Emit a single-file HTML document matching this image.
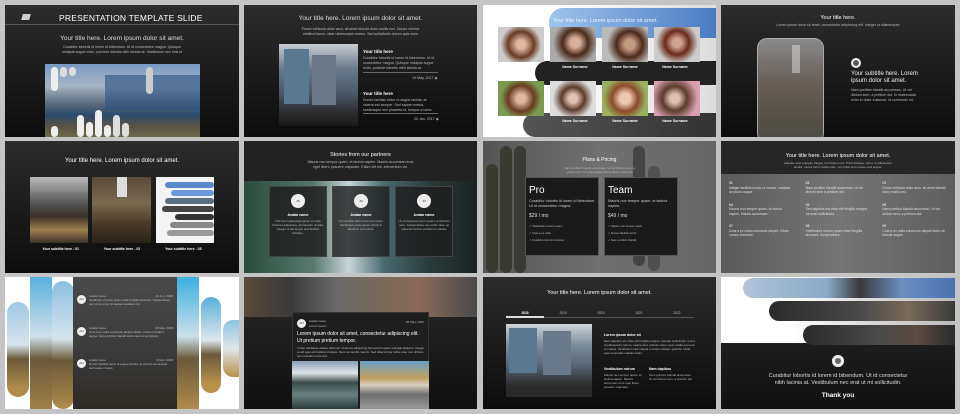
<!DOCTYPE html>
<html><head><meta charset="utf-8"><style>
*{margin:0;padding:0;box-sizing:border-box}
body{width:960px;height:414px;background:#c4c4c4;position:relative;overflow:hidden;font-family:"Liberation Sans",sans-serif;color:#fff}
.s{position:absolute;overflow:hidden;background:linear-gradient(#2c2c2c,#0c0c0c)}
.a{position:absolute}
.t{position:absolute;left:0;right:0;text-align:center;white-space:nowrap}
.sm{font-size:3.6px;color:#bbb;line-height:5px}
.pill{position:absolute;border-radius:20px}
.c{position:absolute;border-radius:50%;background:#eee;color:#333;font-size:3px;text-align:center}
</style></head><body>

<!-- Slide 1 -->
<div class="s" style="left:5px;top:5px;width:234px;height:132px">
 <div class="a" style="left:17px;top:9px;width:8px;height:6px;background:#ccc;transform:skewX(-15deg)"></div>
 <div class="a" style="left:54px;top:8px;font-size:8.5px;letter-spacing:.2px">PRESENTATION TEMPLATE SLIDE</div>
 <div class="a" style="left:0;right:0;top:19px;height:1px;background:#555"></div>
 <div class="t" style="top:30px;font-size:6.5px;color:#ddd">Your title here. Lorem ipsum dolor sit amet.</div>
 <div class="t sm" style="top:40px">Curabitur lobortis id lorem id bibendum. Ut id consectetur magna. Quisque<br>volutpat augue enim, pulvinar lobortis nibh lacinia at. Vestibulum nec erat ut</div>
 <div class="a" style="left:40px;top:59px;width:155px;height:73px;background:linear-gradient(180deg,#7a9ac4 0%,#a7b4c4 30%,#5a6a7a 55%,#2a4b6a 70%,#5a5245 85%,#6b6a48 100%)"></div>
 <div class="a" style="left:100px;top:70px;width:95px;height:35px;background:rgba(40,80,130,.6)"></div>
 <div class="pill" style="left:46px;top:62px;width:7px;height:24px;background:#eee"></div>
 <div class="pill" style="left:55px;top:62px;width:7px;height:10px;background:#ddd"></div>
 <div class="pill" style="left:64px;top:62px;width:7px;height:9px;background:#ddd"></div>
 <div class="pill" style="left:72px;top:110px;width:7px;height:22px;background:#eee"></div>
 <div class="pill" style="left:81px;top:117px;width:7px;height:15px;background:#eee"></div>
 <div class="pill" style="left:90px;top:105px;width:7px;height:27px;background:#eee"></div>
 <div class="pill" style="left:99px;top:120px;width:7px;height:12px;background:#eee"></div>
 <div class="pill" style="left:108px;top:110px;width:7px;height:22px;background:#ddd"></div>
 <div class="pill" style="left:117px;top:118px;width:7px;height:14px;background:#ddd"></div>
 <div class="pill" style="left:141px;top:62px;width:7px;height:27px;background:#ccc"></div>
 <div class="pill" style="left:46px;top:121px;width:7px;height:11px;background:#eee"></div>
</div>

<!-- Slide 2 -->
<div class="s" style="left:244px;top:5px;width:233px;height:132px">
 <div class="t" style="top:10px;font-size:6.5px;color:#ddd">Your title here. Lorem ipsum dolor sit amet.</div>
 <div class="t sm" style="top:22px">Fusce vehicula dolor arcu, sit amet blandit dolor mollis nec. Donec viverra<br>eleifend lacus, vitae ullamcorper metus. Sed sollicitudin ipsum quis nunc</div>
 <div class="a" style="left:35px;top:39px;width:79px;height:82px;background:linear-gradient(180deg,#c8ccd2 0%,#6a7a8a 30%,#4a5868 60%,#2a2a2a 85%,#1a1a1a)"></div>
 <div class="a" style="left:40px;top:44px;width:25px;height:55px;background:#5a7890"></div>
 <div class="a" style="left:68px;top:50px;width:24px;height:50px;background:#6a7888"></div>
 <div class="a" style="left:119px;top:44px;font-size:4.5px;font-weight:bold">Your title here</div>
 <div class="a sm" style="left:119px;top:51px;width:75px">Curabitur lobortis id lorem id bibendum. Ut id consectetur magna. Quisque volutpat augue enim, pulvinar lobortis nibh lacinia at.</div>
 <div class="a" style="left:119px;top:67px;width:75px;height:1px;background:#666"></div>
 <div class="a sm" style="left:168px;top:71px">19 May, 2017 ◉</div>
 <div class="a" style="left:119px;top:86px;font-size:4.5px;font-weight:bold">Your title here</div>
 <div class="a sm" style="left:119px;top:93px;width:75px">Donec facilisis tortor ut augue lacinia, at viverra est semper. Sed sapien metus, scelerisque nec pharetra id, tempor a tortor.</div>
 <div class="a" style="left:119px;top:108px;width:75px;height:1px;background:#666"></div>
 <div class="a sm" style="left:170px;top:112px">20 Jan, 2017 ◉</div>
</div>

<!-- Slide 3 -->
<div class="s" style="left:483px;top:5px;width:233px;height:132px;background:linear-gradient(90deg,#fff 30%,#ddd)">
 <div class="a" style="left:66px;top:3px;width:167px;height:30px;border-radius:14px 0 0 14px;background:linear-gradient(90deg,#9ec4ec,#4a7cc4)"></div>
 <div class="a" style="left:70px;top:13px;font-size:5.5px;color:#e8f0ff">Your title here. Lorem ipsum dolor sit amet.</div>
 <div class="a" style="left:52px;top:56px;width:181px;height:24px;border-radius:12px 0 0 12px;background:#222"></div>
 <div class="a" style="left:40px;top:108px;width:193px;height:24px;border-radius:12px 0 0 12px;background:linear-gradient(90deg,#555,#333)"></div>
 <div class="a" style="left:15px;top:22px;width:46px;height:35px;background:radial-gradient(circle at 50% 50%,#e0b8a0 15%,#6a3a24 45%,#ccc 70%)"></div>
 <div class="a" style="left:67px;top:22px;width:46px;height:35px;background:radial-gradient(circle at 55% 45%,#d8b09a 15%,#4a2a1a 40%,#aaa 70%)"></div>
 <div class="a" style="left:119px;top:22px;width:46px;height:35px;background:radial-gradient(circle at 60% 50%,#c49a80 15%,#4a2a1a 40%,#bbb 70%)"></div>
 <div class="a" style="left:171px;top:22px;width:46px;height:35px;background:radial-gradient(circle at 50% 45%,#d0a090 15%,#6a2a1a 40%,#ccc 70%)"></div>
 <div class="a" style="left:15px;top:76px;width:46px;height:35px;background:radial-gradient(circle at 50% 50%,#e0b8a0 15%,#6a3a20 45%,#7a9a50 70%)"></div>
 <div class="a" style="left:67px;top:76px;width:46px;height:35px;background:radial-gradient(circle at 50% 50%,#e0c0b0 15%,#5a3a2a 40%,#ddd 70%)"></div>
 <div class="a" style="left:119px;top:76px;width:46px;height:35px;background:radial-gradient(circle at 50% 50%,#f0c8b0 18%,#8a4a2a 45%,#9ab060 75%)"></div>
 <div class="a" style="left:171px;top:76px;width:46px;height:35px;background:radial-gradient(circle at 45% 50%,#e0c0b0 15%,#5a3a2a 40%,#d8a0b0 75%)"></div>
 <div class="a" style="left:67px;top:60px;width:150px;font-size:3.5px;font-weight:bold;display:flex;justify-content:space-around"><span>Name Surname</span><span>Name Surname</span><span>Name Surname</span></div>
 <div class="a" style="left:67px;top:114px;width:150px;font-size:3.5px;font-weight:bold;display:flex;justify-content:space-around"><span>Name Surname</span><span>Name Surname</span><span>Name Surname</span></div>
</div>

<!-- Slide 4 -->
<div class="s" style="left:721px;top:5px;width:234px;height:132px">
 <div class="t" style="top:10px;font-size:5.5px">Your title here.</div>
 <div class="t sm" style="top:18px">Lorem ipsum dolor sit amet, consectetur adipiscing elit. Integer ut ullamcorper</div>
 <div class="a" style="left:36px;top:33px;width:67px;height:105px;border:1.5px solid #aaa;border-radius:10px;background:linear-gradient(180deg,#8a8a8a,#6a605a 40%,#5a5448 70%,#4a4a44)"></div>
 <div class="a" style="left:71px;top:40px;width:8px;height:28px;background:#ddd;opacity:.5"></div>
 <div class="c" style="left:130px;top:53px;width:10px;height:10px;background:#eee;border:2.5px solid #eee;box-shadow:inset 0 0 0 3px #555"></div>
 <div class="a" style="left:130px;top:66px;font-size:6px;line-height:7px;color:#eee">Your subtitle here. Lorem<br>ipsum dolor sit amet.</div>
 <div class="a sm" style="left:130px;top:83px;width:65px">Nam porttitor blandit accumsan. Ut vel dictum sem, a pretium dui. In malesuada enim in dolor euismod, id commodo mi.</div>
</div>

<!-- Slide 5 -->
<div class="s" style="left:5px;top:141px;width:234px;height:132px">
 <div class="t" style="top:17px;font-size:6px">Your title here. Lorem ipsum dolor sit amet.</div>
 <div class="a" style="left:25px;top:36px;width:58px;height:66px;background:linear-gradient(180deg,#bbb,#555 40%,#3a3028 60%,#a08050 80%,#3a3028)"></div>
 <div class="a" style="left:87px;top:36px;width:59px;height:66px;background:linear-gradient(180deg,#5a4a3a,#7a6a50 40%,#4a3a2a 70%,#2a2218)"></div>
 <div class="a" style="left:112px;top:36px;width:10px;height:20px;background:#ddd"></div>
 <div class="a" style="left:151px;top:36px;width:58px;height:66px;background:#f4f4f4"></div>
 <div class="pill" style="left:160px;top:41px;width:49px;height:6px;background:#5a88c8"></div>
 <div class="pill" style="left:166px;top:49px;width:43px;height:6px;background:#6a98d8"></div>
 <div class="pill" style="left:160px;top:57px;width:49px;height:6px;background:#5a7080"></div>
 <div class="pill" style="left:157px;top:65px;width:52px;height:6px;background:#444"></div>
 <div class="pill" style="left:170px;top:73px;width:39px;height:6px;background:#333"></div>
 <div class="pill" style="left:165px;top:81px;width:44px;height:6px;background:#888"></div>
 <div class="pill" style="left:162px;top:89px;width:47px;height:6px;background:#999"></div>
 <div class="a" style="left:25px;top:106px;width:184px;font-size:3.5px;font-weight:bold;display:flex;justify-content:space-around"><span>Your subtitle here - 01</span><span>Your subtitle here - 02</span><span>Your subtitle here - 03</span></div>
</div>

<!-- Slide 6 -->
<div class="s" style="left:244px;top:141px;width:233px;height:132px;background:#222">
 <div class="t" style="top:11px;font-size:5.5px">Stories from our partners</div>
 <div class="t sm" style="top:19px">Mauris non tempor quam, et lacinia sapien. Mauris accumsan eros<br>eget libero posuere vulputate. Etiam elit elit, elementum vel.</div>
 <div class="a" style="left:0;top:40px;width:233px;height:92px;background:linear-gradient(90deg,#2a4a3a,#5a7a70 30%,#c8d4d8 45%,#4a6a70 60%,#2a3a3a 80%,#1a2222)"></div>
 <div class="a" style="left:25px;top:45px;width:58px;height:71px;background:rgba(30,30,30,.85);border:1px solid #444"></div>
 <div class="a" style="left:88px;top:45px;width:58px;height:71px;background:rgba(30,30,30,.8);border:1px solid #444"></div>
 <div class="a" style="left:151px;top:45px;width:58px;height:71px;background:rgba(30,30,30,.85);border:1px solid #444"></div>
 <div class="c" style="left:47px;top:53px;width:14px;height:14px;line-height:14px">JN</div>
 <div class="c" style="left:110px;top:53px;width:14px;height:14px;line-height:14px">JN</div>
 <div class="c" style="left:173px;top:53px;width:14px;height:14px;line-height:14px">JN</div>
 <div class="a" style="left:25px;top:72px;width:58px;text-align:center;font-size:3.5px;font-weight:bold">Avatar name</div>
 <div class="a" style="left:88px;top:72px;width:58px;text-align:center;font-size:3.5px;font-weight:bold">Avatar name</div>
 <div class="a" style="left:151px;top:72px;width:58px;text-align:center;font-size:3.5px;font-weight:bold">Avatar name</div>
 <div class="a sm" style="left:28px;top:78px;width:52px;text-align:center;font-size:3px;line-height:4px">Orci leo malesuada ipsum at nulla rhoncus adipiscing, fermentum ut ante. Integer id elit augue sed facilisis tristique.</div>
 <div class="a sm" style="left:91px;top:78px;width:52px;text-align:center;font-size:3px;line-height:4px">Ut convallis nibh in dui commodo. Vestibulum ante ipsum primis in faucibus orci luctus.</div>
 <div class="a sm" style="left:154px;top:78px;width:52px;text-align:center;font-size:3px;line-height:4px">Ut consectetur ipsum quam, a rhoncus arcu. Suspendisse nec tortor vitae, at placerat ultrices porttitor in massa.</div>
</div>

<!-- Slide 7 -->
<div class="s" style="left:483px;top:141px;width:233px;height:132px;background:linear-gradient(90deg,#555,#707070 50%,#666)">
 <div class="pill" style="left:3px;top:23px;width:12px;height:109px;background:#3a3a30"></div>
 <div class="pill" style="left:17px;top:5px;width:12px;height:127px;background:#3a3a30"></div>
 <div class="pill" style="left:31px;top:5px;width:12px;height:127px;background:#3a3a34"></div>
 <div class="pill" style="left:150px;top:5px;width:12px;height:120px;background:#444"></div>
 <div class="pill" style="left:165px;top:25px;width:12px;height:105px;background:#505050"></div>
 <div class="t" style="top:16px;font-size:5px">Plans &amp; Pricing</div>
 <div class="t sm" style="top:25px;font-size:3px;line-height:4px">Nam porttitor blandit accumsan. Ut vel dictum sem, a<br>pretium dui. In malesuada enim in dolor euismod.</div>
 <div class="a" style="left:42px;top:36px;width:74px;height:79px;background:#1a1a1a;border:1px solid #555"></div>
 <div class="a" style="left:121px;top:36px;width:74px;height:79px;background:#1a1a1a;border:1px solid #555"></div>
 <div class="a" style="left:46px;top:44px;font-size:10px">Pro</div>
 <div class="a" style="left:125px;top:44px;font-size:10px">Team</div>
 <div class="a" style="left:46px;top:58px;width:68px;font-size:3.8px;line-height:5px;color:#ccc">Curabitur lobortis id lorem id bibendum. Ut id consectetur magna.</div>
 <div class="a" style="left:125px;top:58px;width:68px;font-size:3.8px;line-height:5px;color:#ccc">Mauris non tempor quam, et lacinia sapien.</div>
 <div class="a" style="left:46px;top:72px;font-size:5px;color:#ddd">$29 / mo</div>
 <div class="a" style="left:125px;top:72px;font-size:5px;color:#ddd">$49 / mo</div>
 <div class="a sm" style="left:46px;top:82px;font-size:2.8px;line-height:7px">✓ Vestibulum rutrum quam<br>✓ Cras a ex nulla<br>✓ Curabitur lobortis id lorem</div>
 <div class="a sm" style="left:125px;top:82px;font-size:2.8px;line-height:7px">✓ Mauris non tempor quam<br>✓ Donec facilisis tortor<br>✓ Nam porttitor blandit</div>
</div>

<!-- Slide 8 -->
<div class="s" style="left:721px;top:141px;width:234px;height:132px;background:linear-gradient(90deg,#5a5a5a,#767676 50%,#5e5e5e)">
 <div class="a" style="left:0;top:0;width:234px;height:33px;background:#262626"></div>
 <div class="t" style="top:12px;font-size:5.5px">Your title here. Lorem ipsum dolor sit amet.</div>
 <div class="t sm" style="top:20px;font-size:3px;line-height:4px">Aliquam erat volutpat. Integer ut tincidunt orci. Proin tristique, elit ut condimentum<br>iaculis, metus tortor mattis justo, vel mollis eros neque quis augue.</div>
 <div class="a" style="left:8px;top:40px;width:218px;font-size:3.4px;line-height:4.5px;color:#ddd;display:grid;grid-template-columns:1fr 1fr 1fr;row-gap:8px;column-gap:12px">
  <div><b>01</b><br>Integer facilisis luctus ut mauris, volutpat ac purus augue.</div>
  <div><b>02</b><br>Nam porttitor blandit accumsan. Ut vel dictum sem a pretium dui.</div>
  <div><b>03</b><br>Fusce vehicula dolor arcu, sit amet blandit dolor mollis nec.</div>
  <div><b>04</b><br>Mauris non tempor quam, et lacinia sapien. Mauris accumsan.</div>
  <div><b>05</b><br>Sed dapibus est vitae elit fringilla congue. Aenean sollicitudin.</div>
  <div><b>06</b><br>Nam porttitor blandit accumsan. Ut vel dictum sem, a pretium dui.</div>
  <div><b>07</b><br>Cras a ex nulla commodo aliquet. Etiam cursus tincidunt.</div>
  <div><b>08</b><br>Vestibulum rutrum quam vitae fringilla tincidunt. Suspendisse.</div>
  <div><b>09</b><br>Cras a ex nulla commodo aliquet dolor sit blandit augue.</div>
 </div>
</div>

<!-- Slide 9 -->
<div class="s" style="left:5px;top:277px;width:234px;height:132px;background:#fff">
 <div class="pill" style="left:2px;top:25px;width:22px;height:95px;background:linear-gradient(#9cc8e4,#d8e4ec 45%,#6a5a3a 60%,#b08a4a 90%)"></div>
 <div class="pill" style="left:25px;top:0;width:22px;height:132px;border-radius:0;background:linear-gradient(#5ab0dc,#cfe0ea 45%,#6a5a3a 62%,#a08048)"></div>
 <div class="pill" style="left:47px;top:4px;width:22px;height:128px;background:linear-gradient(#8ac0e0,#d8e4ec 45%,#6a5a3a 62%,#b08a4a)"></div>
 <div class="a" style="left:68px;top:0;width:104px;height:132px;background:linear-gradient(#4a4a4a,#3a3a3a 60%,#2e2a24)"></div>
 <div class="pill" style="left:172px;top:0;width:22px;height:132px;border-radius:0;background:linear-gradient(#3ab0e0,#cce0ea 45%,#6a5a3a 62%,#b08a4a)"></div>
 <div class="pill" style="left:196px;top:20px;width:20px;height:96px;background:linear-gradient(#5ab0dc,#dde6ec 45%,#6a5a3a 60%,#b8904a 90%)"></div>
 <div class="pill" style="left:218px;top:43px;width:16px;height:57px;border-radius:10px 0 0 10px;background:linear-gradient(#8ac4e0,#e0e6ea 50%,#b8904a)"></div>
 <div class="c" style="left:72px;top:18px;width:9px;height:9px;line-height:9px">AN</div>
 <div class="c" style="left:72px;top:50px;width:9px;height:9px;line-height:9px">AN</div>
 <div class="c" style="left:72px;top:82px;width:9px;height:9px;line-height:9px">AN</div>
 <div class="a sm" style="left:84px;top:17px;width:84px;font-size:3px;line-height:4px">Avatar name<span style="float:right">21 Jun, 2018</span><br>Vestibulum rutrum quam vitae fringilla tincidunt. Suspendisse nec tortor urna. Ut laoreet sodales nisi.</div>
 <div class="a sm" style="left:84px;top:49px;width:84px;font-size:3px;line-height:4px">Avatar name<span style="float:right">26 May, 2018</span><br>Cras a ex nulla commodo aliquet. Etiam cursus tincidunt augue. Nam porttitor blandit accumsan ut vel dictum.</div>
 <div class="a sm" style="left:84px;top:81px;width:84px;font-size:3px;line-height:4px">Avatar name<span style="float:right">19 Apr, 2018</span><br>Donec facilisis tortor ut augue lacinia, at viverra est semper sed sapien metus.</div>
</div>

<!-- Slide 10 -->
<div class="s" style="left:244px;top:277px;width:233px;height:132px;background:linear-gradient(#2a2a2a,#101010)">
 <div class="a" style="left:0;top:0;width:233px;height:40px;background:linear-gradient(90deg,#5a4a3a,#3a3a3a 20%,#6a6a6a 40%,#7a6a5a 60%,#8a6a5a 75%,#4a4a4a)"></div>
 <div class="a" style="left:48px;top:35px;width:137px;height:97px;background:#1e1e1e;border:1px solid #333"></div>
 <div class="c" style="left:53px;top:42px;width:9px;height:9px;line-height:9px">AN</div>
 <div class="a sm" style="left:65px;top:42px;font-size:3px">Avatar name<br>Lorem ipsum</div>
 <div class="a sm" style="left:162px;top:43px;font-size:3px">05 May, 2020</div>
 <div class="a" style="left:53px;top:54px;width:128px;font-size:5px;line-height:6.5px">Lorem ipsum dolor sit amet, consectetur adipiscing elit. Ut pretium pretium tempor.</div>
 <div class="a sm" style="left:53px;top:69px;width:128px;font-size:3px;line-height:4px">In hac habitasse platea dictumst. Vivamus adipiscing fermentum quam volutpat aliquam. Integer et elit eget elit facilisis tristique. Nam vel iaculis mauris. Sed ullamcorper tellus erat, non ultrices sem tincidunt euismod.</div>
 <div class="a" style="left:48px;top:84px;width:66px;height:48px;background:linear-gradient(#8aa0b8,#e0e4e8 25%,#3a4a4a 45%,#6a8080 70%,#2a3a3a)"></div>
 <div class="a" style="left:116px;top:84px;width:69px;height:48px;background:linear-gradient(#6aa0c8,#c0a060 35%,#d8d0c0 50%,#707070 70%,#999)"></div>
</div>

<!-- Slide 11 -->
<div class="s" style="left:483px;top:277px;width:233px;height:132px">
 <div class="t" style="top:13px;font-size:5.5px">Your title here. Lorem ipsum dolor sit amet.</div>
 <div class="a sm" style="left:23px;top:34px;width:190px;font-size:3.2px;display:flex;justify-content:space-around"><span style="color:#fff;font-weight:bold">2018</span><span>2019</span><span>2020</span><span>2021</span><span>2022</span></div>
 <div class="a" style="left:23px;top:40px;width:188px;height:1px;background:#555"></div>
 <div class="a" style="left:23px;top:39px;width:38px;height:2px;background:#ddd"></div>
 <div class="a" style="left:23px;top:47px;width:86px;height:73px;background:linear-gradient(180deg,#cfd4d8,#7a8a98 30%,#5a6878 55%,#2a2a2a 85%)"></div>
 <div class="a" style="left:26px;top:51px;width:28px;height:45px;background:#5a7890"></div>
 <div class="a" style="left:60px;top:54px;width:28px;height:44px;background:#6a7a8a"></div>
 <div class="a" style="left:121px;top:56px;font-size:3.5px;font-weight:bold">Lorem ipsum dolor sit</div>
 <div class="a sm" style="left:121px;top:62px;width:92px;font-size:3px;line-height:4px">Nam dapibus est vitae elit fringilla congue. Aenean sollicitudin, erat a condimentum rutrum, neque arcu pretium tortor, quis mattis est nunc et massa. Vestibulum sed magna in turpis tristique gravida. Nulla eget venenatis sodales diam.</div>
 <div class="a" style="left:121px;top:90px;font-size:3.5px;font-weight:bold">Vestibulum rutrum</div>
 <div class="a" style="left:166px;top:90px;font-size:3.5px;font-weight:bold">Nam dapibus</div>
 <div class="a sm" style="left:121px;top:96px;width:42px;font-size:3px;line-height:4px">Mauris non tempor quam, et lacinia sapien. Mauris accumsan eros eget libero posuere vulputate.</div>
 <div class="a sm" style="left:166px;top:96px;width:45px;font-size:3px;line-height:4px">Nam porttitor blandit accumsan. Ut vel dictum sem, a pretium dui.</div>
</div>

<!-- Slide 12 -->
<div class="s" style="left:721px;top:277px;width:234px;height:132px;background:linear-gradient(#2a2a2a,#111)">
 <div class="a" style="left:0;top:0;width:234px;height:66px;background:linear-gradient(90deg,#fff 30%,#ddd 60%,#bbb)"></div>
 <div class="a" style="left:22px;top:1px;width:212px;height:20px;border-radius:10px 0 0 10px;background:linear-gradient(90deg,#b0c4d8,#8aa8c8 40%,#3a3a3a 55%,#6a90c0 75%,#4a70b0)"></div>
 <div class="a" style="left:48px;top:24px;width:186px;height:20px;border-radius:10px 0 0 10px;background:linear-gradient(90deg,#2a2a2a,#4a4a4a 50%,#7a6a5a 75%,#3a3a3a)"></div>
 <div class="a" style="left:82px;top:48px;width:152px;height:20px;border-radius:10px 0 0 10px;background:linear-gradient(90deg,#2a2a2a,#4a4a4a 50%,#5a4a40 75%,#2a2a2a)"></div>
 <div class="c" style="left:111px;top:78px;width:12px;height:12px;background:#eee;box-shadow:inset 0 0 0 3px #eee,inset 0 0 0 8px #666"></div>
 <div class="t" style="top:96px;font-size:5.5px;line-height:7px;color:#ddd">Curabitur lobortis id lorem id bibendum. Ut id consectetur<br>nibh lacinia at. Vestibulum nec erat ut mi sollicitudin.</div>
 <div class="t" style="top:115px;font-size:6.5px;font-weight:bold">Thank you</div>
</div>

</body></html>
